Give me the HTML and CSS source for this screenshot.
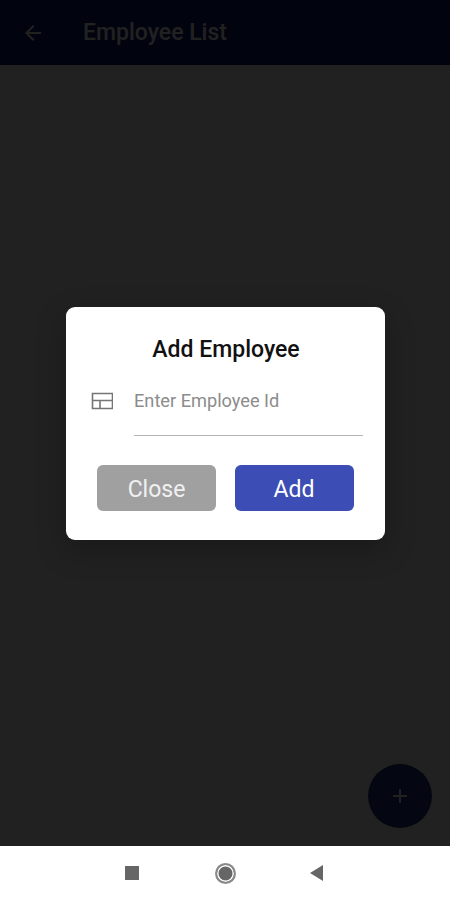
FILE: index.html
```html
<!DOCTYPE html>
<html lang="en">

<head>
    <meta charset="UTF-8">
    <meta name="viewport" content="width=device-width, initial-scale=1.0">
    <title>Employee List</title>
    <link rel="stylesheet" href="styles.css">
</head>

<body>
    <div class="screen">
        <div class="app">
            <header class="appbar">
                <svg class="back" width="24" height="24" viewBox="0 0 24 24">
                    <path d="M20 11H7.83l5.59-5.59L12 4l-8 8 8 8 1.41-1.41L7.83 13H20z" />
                </svg>
                <h1>Employee List</h1>
            </header>
            <main class="list"></main>
            <button class="fab">
                <svg width="24" height="24" viewBox="0 0 24 24">
                    <path d="M19 13h-6v6h-2v-6H5v-2h6V5h2v6h6z" />
                </svg>
            </button>
            <div class="backdrop">
                <section class="dialog">
                    <h2>Add Employee</h2>
                    <div class="field">
                        <svg class="field-icon" width="24" height="20" viewBox="0 0 24 20">
                            <path d="M3.5 2.5h20v15h-20zM3.5 9.5h20M11 9.5v8" />
                        </svg>
                        <div class="input">Enter Employee Id</div>
                    </div>
                    <div class="actions">
                        <button class="btn btn-close">Close</button>
                        <button class="btn btn-add">Add</button>
                    </div>
                </section>
            </div>
        </div>
        <nav class="navbar">
            <span class="nav-square"></span>
            <span class="nav-circle"></span>
            <span class="nav-back"></span>
        </nav>
    </div>
</body>

</html>
```

FILE: styles.css
```css
* {
    box-sizing: border-box;
}

body {
    margin: 0;
    background: #fff;
    font-family: Roboto, "Noto Sans", sans-serif;
}

.screen {
    display: flex;
    flex-direction: column;
    width: 450px;
    height: 900px;
    overflow: hidden;
}

.app {
    position: relative;
    flex: 1;
    display: flex;
    flex-direction: column;
    background: #fff;
}

.appbar {
    height: 65px;
    display: flex;
    align-items: center;
    gap: 38px;
    padding: 0 21px;
    background: #0f1773;
    color: #fff;
}

.appbar h1 {
    margin: 0;
    font-size: 23px;
    font-weight: 500;
}

.back {
    fill: #fff;
}

.list {
    flex: 1;
}

.fab {
    position: absolute;
    right: 18px;
    bottom: 18px;
    width: 64px;
    height: 64px;
    display: flex;
    align-items: center;
    justify-content: center;
    padding: 0;
    border: 0;
    border-radius: 50%;
    background: #253080;
}

.fab svg {
    fill: #fff;
}

.backdrop {
    position: absolute;
    top: 0;
    right: 0;
    bottom: 0;
    left: 0;
    padding: 307px 65px 0 66px;
    background: rgba(0, 0, 0, 0.87);
}

.dialog {
    height: 233px;
    padding: 30px 22px 0 23px;
    border-radius: 9px;
    background: #fff;
    box-shadow: 0 10px 30px rgba(0, 0, 0, 0.25);
}

.dialog h2 {
    margin: 0;
    font-size: 23px;
    line-height: 26px;
    font-weight: 500;
    text-align: center;
    color: #111;
}

.field {
    display: flex;
    gap: 21px;
    margin-top: 12px;
}

.field-icon {
    margin-top: 16px;
    fill: none;
    stroke: #757575;
    stroke-width: 1.6;
}

.input {
    flex: 1;
    height: 61px;
    padding-top: 15px;
    border-bottom: 1.5px solid #b4b4b4;
    font-size: 18.2px;
    color: #8c8c8c;
}

.actions {
    display: flex;
    justify-content: space-between;
    margin-top: 29px;
    padding: 0 9px 0 8px;
}

.btn {
    width: 119px;
    height: 46px;
    padding: 2px 0 0;
    border: 0;
    border-radius: 6px;
    font-family: inherit;
    font-size: 23px;
    color: #fff;
}

.btn-close {
    background: #a0a0a0;
    color: #f0f0f0;
}

.btn-add {
    padding-right: 1px;
    background: #3c4db5;
}

.navbar {
    height: 54px;
    display: flex;
    align-items: center;
    justify-content: center;
    gap: 75px;
    padding-right: 2px;
    background: #fff;
}

.nav-square {
    width: 14px;
    height: 14px;
    background: #666;
}

.nav-circle {
    width: 21px;
    height: 21px;
    margin: 0 -1px 0 1px;
    border: 2px solid #8a8a8a;
    border-radius: 50%;
    background: #666;
    box-shadow: inset 0 0 0 1.5px #fff;
}

.nav-back {
    width: 0;
    height: 0;
    border-top: 8px solid transparent;
    border-bottom: 8px solid transparent;
    border-right: 13px solid #666;
}
```
